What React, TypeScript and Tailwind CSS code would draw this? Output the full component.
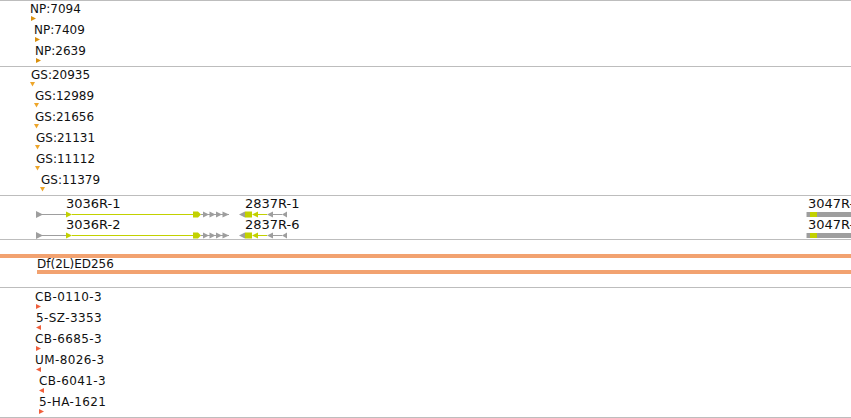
const TRI = {
  right: '0,0 5,2.5 0,5',
  left: '5,0 0,2.5 5,5',
  down: '0,0 5,0 2.5,4.5',
};

type Dir = keyof typeof TRI;

interface Feature {
  label: string;
  textMl: string;
  triMl: string;
  dir: Dir;
}

const npRows: Feature[] = [
  { label: 'NP:7094', textMl: 'ml-[30px]', triMl: 'ml-[31px]', dir: 'right' },
  { label: 'NP:7409', textMl: 'ml-[34px]', triMl: 'ml-[35px]', dir: 'right' },
  { label: 'NP:2639', textMl: 'ml-[35px]', triMl: 'ml-[36px]', dir: 'right' },
];

const gsRows: Feature[] = [
  { label: 'GS:20935', textMl: 'ml-[31px]', triMl: 'ml-[30px]', dir: 'down' },
  { label: 'GS:12989', textMl: 'ml-[35px]', triMl: 'ml-[34px]', dir: 'down' },
  { label: 'GS:21656', textMl: 'ml-[35px]', triMl: 'ml-[34px]', dir: 'down' },
  { label: 'GS:21131', textMl: 'ml-[36px]', triMl: 'ml-[35px]', dir: 'down' },
  { label: 'GS:11112', textMl: 'ml-[36px]', triMl: 'ml-[35px]', dir: 'down' },
  { label: 'GS:11379', textMl: 'ml-[41px]', triMl: 'ml-[40px]', dir: 'down' },
];

const cbRows: Feature[] = [
  { label: 'CB-0110-3', textMl: 'ml-[35px]', triMl: 'ml-[36px]', dir: 'right' },
  { label: '5-SZ-3353', textMl: 'ml-[36px]', triMl: 'ml-[36px]', dir: 'left' },
  { label: 'CB-6685-3', textMl: 'ml-[35px]', triMl: 'ml-[36px]', dir: 'right' },
  { label: 'UM-8026-3', textMl: 'ml-[35px]', triMl: 'ml-[36px]', dir: 'left' },
  { label: 'CB-6041-3', textMl: 'ml-[39px]', triMl: 'ml-[39px]', dir: 'left' },
  { label: '5-HA-1621', textMl: 'ml-[39px]', triMl: 'ml-[39px]', dir: 'right' },
];

const transcripts = [
  { a: '3036R-1', b: '2837R-1', c: '3047R-1' },
  { a: '3036R-2', b: '2837R-6', c: '3047R-2' },
];

function Tri({ dir, color, className }: { dir: Dir; color: string; className: string }) {
  return (
    <svg width="5" height="5" viewBox="0 0 5 5" className={`block shrink-0 ${className}`}>
      <polygon points={TRI[dir]} fill={color} />
    </svg>
  );
}

function FeatureRow({ f, color, textClass = '' }: { f: Feature; color: string; textClass?: string }) {
  return (
    <div className="flex h-[21px] flex-col items-start">
      <div className={`leading-[13px] whitespace-nowrap ${f.textMl} ${textClass}`}>{f.label}</div>
      <Tri dir={f.dir} color={color} className={f.triMl} />
    </div>
  );
}

const GREEN = '#c2d100';
const GRAY = '#9e9e9e';

// one transcript row, drawn at genomic x positions
function TranscriptGlyphs() {
  return (
    <svg width="851" height="7" viewBox="0 0 851 7" className="absolute left-0 top-[15px]">
      {/* 3036R */}
      <rect x="42" y="3" width="25" height="1" fill={GRAY} />
      <polygon points="36,0 43,3.5 36,7" fill={GRAY} />
      <rect x="72" y="3" width="122" height="1" fill={GREEN} />
      <polygon points="66,0.5 72,3.5 66,6.5" fill={GREEN} />
      <polygon points="193,0.5 198,0.5 201,3.5 198,6.5 193,6.5" fill={GREEN} />
      <rect x="201" y="3" width="28" height="1" fill={GRAY} />
      <polygon points="203,0.5 209,3.5 203,6.5" fill={GRAY} />
      <polygon points="209.5,0.5 215.5,3.5 209.5,6.5" fill={GRAY} />
      <polygon points="216,0.5 222,3.5 216,6.5" fill={GRAY} />
      <polygon points="222.5,0.5 229,3.5 222.5,6.5" fill={GRAY} />
      {/* 2837R */}
      <polygon points="245,0.5 239,3.5 245,6.5" fill={GRAY} />
      <rect x="245" y="0.5" width="7" height="6" fill={GREEN} />
      <polygon points="258,0.5 252,3.5 258,6.5" fill={GREEN} />
      <rect x="258" y="3" width="9" height="1" fill={GREEN} />
      <polygon points="273,0.5 267,3.5 273,6.5" fill={GRAY} />
      <rect x="273" y="3" width="9" height="1" fill={GRAY} />
      <polygon points="287,0.5 282,3.5 287,6.5" fill={GRAY} />
      {/* 3047R */}
      <rect x="806" y="1" width="45" height="5" fill={GRAY} />
      <rect x="806" y="1" width="1" height="5" fill="#d0d0d0" />
      <rect x="810" y="1" width="7" height="5" fill={GREEN} />
    </svg>
  );
}

// labels sit at the genomic start of each transcript
function TranscriptRow({ a, b, c }: { a: string; b: string; c: string }) {
  return (
    <div className="relative h-[21px] text-[13px]">
      <span className="absolute left-[66px] top-[1px] leading-[14px]">{a}</span>
      <span className="absolute left-[245px] top-[1px] leading-[14px]">{b}</span>
      <span className="absolute left-[808px] top-[1px] leading-[14px] whitespace-nowrap">{c}</span>
      <TranscriptGlyphs />
    </div>
  );
}

export default function App() {
  return (
    <div className="flex h-[418px] w-[851px] flex-col overflow-hidden border-t border-[#bdbdbd] bg-white text-[12px] text-[#111] font-['DejaVu_Sans',sans-serif]">
      {/* NP track */}
      <div className="flex h-[66px] shrink-0 flex-col border-b border-[#bdbdbd] pt-[2px]">
        {npRows.map((f) => (
          <FeatureRow key={f.label} f={f} color="#d88f0c" />
        ))}
      </div>

      {/* GS track */}
      <div className="flex h-[129px] shrink-0 flex-col border-b border-[#bdbdbd] pt-[2px]">
        {gsRows.map((f) => (
          <FeatureRow key={f.label} f={f} color="#eea62a" />
        ))}
      </div>

      {/* Transcripts */}
      <div className="flex h-[44px] shrink-0 flex-col border-b border-[#bdbdbd]">
        {transcripts.map((t) => (
          <TranscriptRow key={t.a} {...t} />
        ))}
      </div>

      {/* Deficiency */}
      <div className="flex h-[48px] shrink-0 flex-col border-b border-[#bdbdbd] pt-[14px]">
        <div className="h-[4px] bg-[#f2a270]" />
        <div className="ml-[37px] leading-[12px]">Df(2L)ED256</div>
        <div className="ml-[37px] h-[4px] bg-[#f2a270]" />
      </div>

      {/* CB track */}
      <div className="flex h-[130px] shrink-0 flex-col border-b border-[#bdbdbd] pt-[3px]">
        {cbRows.map((f) => (
          <FeatureRow key={f.label} f={f} color="#f0603c" textClass="tracking-[0.4px]" />
        ))}
      </div>
    </div>
  );
}
